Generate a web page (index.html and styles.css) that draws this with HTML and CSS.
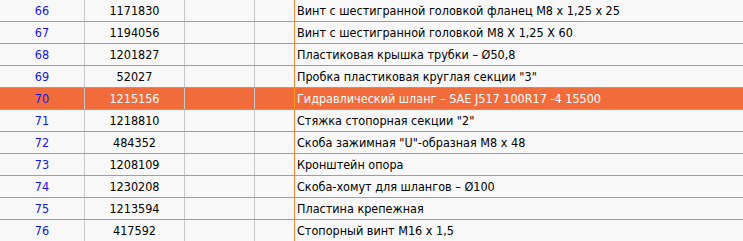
FILE: index.html
```html
<!DOCTYPE html>
<html lang="ru">
<head>
<meta charset="utf-8">
<link rel="stylesheet" href="styles.css">
</head>
<body>
<div class="list">
  <div class="row"><div class="num">66</div><div class="code">1171830</div><div class="c3"></div><div class="c4"></div><div class="desc">Винт с шестигранной головкой фланец M8 x 1,25 x 25</div></div>
  <div class="row"><div class="num">67</div><div class="code">1194056</div><div class="c3"></div><div class="c4"></div><div class="desc">Винт с шестигранной головкой M8 X 1,25 X 60</div></div>
  <div class="row"><div class="num">68</div><div class="code">1201827</div><div class="c3"></div><div class="c4"></div><div class="desc">Пластиковая крышка трубки – Ø50,8</div></div>
  <div class="row"><div class="num">69</div><div class="code">52027</div><div class="c3"></div><div class="c4"></div><div class="desc">Пробка пластиковая круглая секции "3"</div></div>
  <div class="row active"><div class="num">70</div><div class="code">1215156</div><div class="c3"></div><div class="c4"></div><div class="desc">Гидравлический шланг – SAE J517 100R17 -4 15500</div></div>
  <div class="row"><div class="num">71</div><div class="code">1218810</div><div class="c3"></div><div class="c4"></div><div class="desc">Стяжка стопорная секции "2"</div></div>
  <div class="row"><div class="num">72</div><div class="code">484352</div><div class="c3"></div><div class="c4"></div><div class="desc">Скоба зажимная "U"-образная M8 x 48</div></div>
  <div class="row"><div class="num">73</div><div class="code">1208109</div><div class="c3"></div><div class="c4"></div><div class="desc">Кронштейн опора</div></div>
  <div class="row"><div class="num">74</div><div class="code">1230208</div><div class="c3"></div><div class="c4"></div><div class="desc">Скоба-хомут для шлангов – Ø100</div></div>
  <div class="row"><div class="num">75</div><div class="code">1213594</div><div class="c3"></div><div class="c4"></div><div class="desc">Пластина крепежная</div></div>
  <div class="row"><div class="num">76</div><div class="code">417592</div><div class="c3"></div><div class="c4"></div><div class="desc">Стопорный винт M16 x 1,5</div></div>
</div>
</body>
</html>
```

FILE: styles.css
```css
html, body {
  margin: 0;
  padding: 0;
  background: #f8f8f8;
}
.list {
  font-family: "DejaVu Sans Condensed", "DejaVu Sans", Verdana, sans-serif;
  font-size: 12.5px;
  color: #000;
  width: 743px;
  overflow: hidden;
}
.row {
  display: grid;
  grid-template-columns: 85px 100px 70px 40px 1fr;
  height: 22px;
  box-sizing: border-box;
  border-bottom: 1px solid #f0883a;
}
.row > div {
  box-sizing: border-box;
  line-height: 21px;
  white-space: nowrap;
}
.num, .code, .c3 {
  border-right: 1px solid #c8c8c8;
  text-align: center;
}
.c4 {
  border-right: 1px solid #f0883a;
}
.num {
  color: #1414f0;
}
.desc {
  padding-left: 2px;
}
.row.active {
  background: #f26b3b;
}
.row.active .code,
.row.active .desc {
  color: #fff;
}
.row.active .c4 {
  border-right-color: #ff9a20;
}
```
